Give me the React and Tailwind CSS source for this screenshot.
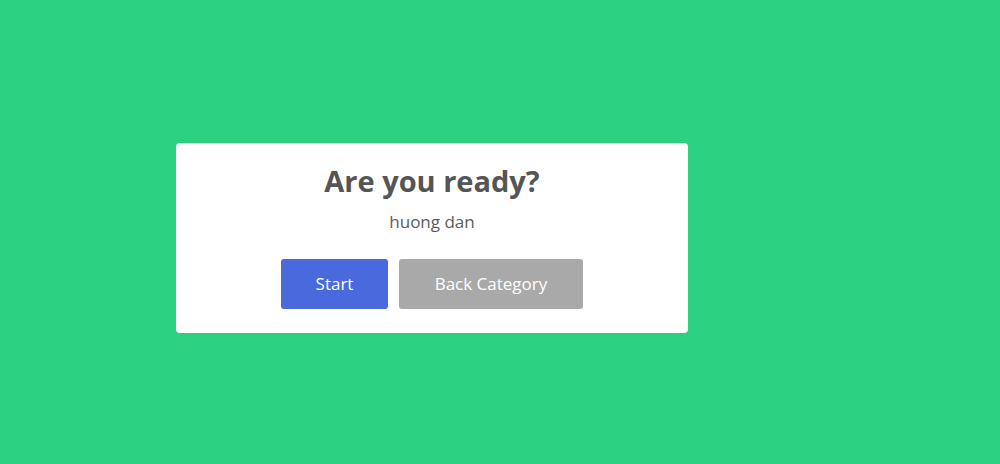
export default function App() {
  return (
    <div
      className="min-h-screen w-full bg-[#2bd17e] pt-[143px] pl-[176px]"
      style={{ fontFamily: '"Open Sans", "Lato", sans-serif' }}
    >
      <div className="w-[512px] h-[190px] bg-white rounded-[4px] flex flex-col items-center pt-[18px]">
        <h1 className="text-[29px] leading-[40px] font-bold text-[#555555]">Are you ready?</h1>
        <p className="mt-[9px] text-[17px] leading-[24px] text-[#5c5c5c]">huong dan</p>
        <div className="mt-[25px] flex gap-[11px]">
          <button className="w-[107px] h-[50px] rounded-[3px] bg-[#4a69dd] text-white text-[17px]">
            Start
          </button>
          <button className="w-[184px] h-[50px] rounded-[3px] bg-[#a9a9a9] text-white text-[17px]">
            Back Category
          </button>
        </div>
      </div>
    </div>
  );
}
